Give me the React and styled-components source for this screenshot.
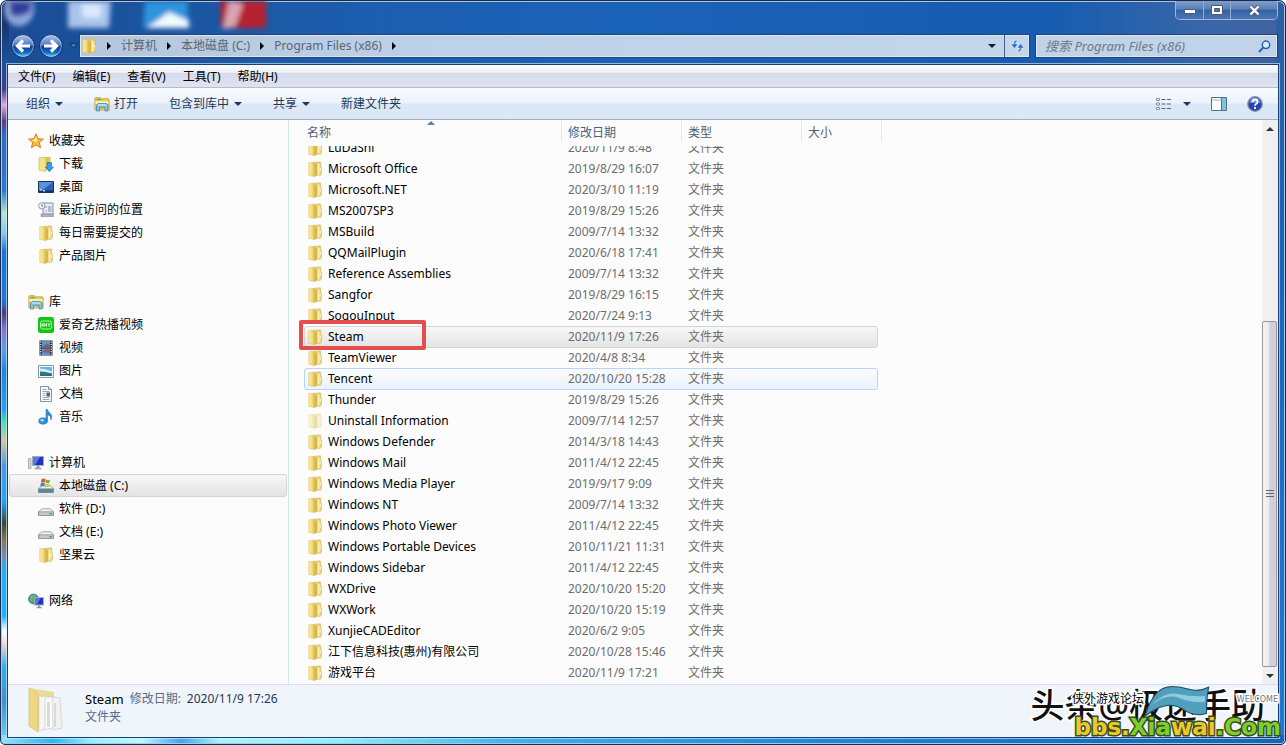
import { useId } from "react";
import styled, { createGlobalStyle } from "styled-components";

const GlobalStyle = createGlobalStyle`
  * {
    box-sizing: border-box;
  }

  body {
    margin: 0;
    font-family: "Noto Sans", "Noto Sans CJK SC", sans-serif;
    font-size: 12px;
    line-height: 20px;
    color: #000;
  }

  button,
  input {
    font: inherit;
    color: inherit;
    border: 0;
    padding: 0;
    background: none;
  }

  svg {
    display: block;
    flex-shrink: 0;
  }
`;

const Window = styled.div`
  position: relative;
  display: flex;
  flex-direction: column;
  height: 100vh;
  min-height: 480px;
  padding: 0 7px 7px;
  overflow: hidden;
  border: 1px solid #1b2c4a;
  border-radius: 7px 7px 5px 5px;
  box-shadow: inset 0 0 0 1px #a9c6e6;
  background:
    linear-gradient(
        90deg,
        #8fe6fb 0%,
        #26b6f0 4%,
        #8ff3ff 7%,
        #b6fbff 11%,
        #3fa4f0 14%,
        #a5f5fb 17%,
        #8df1f8 26%,
        #35b5ee 40%,
        #1b8ae0 62%,
        #1272c8 84%,
        #1566b4 100%
      )
      bottom / 100% 9px no-repeat,
    linear-gradient(
        180deg,
        #12295c 0,
        #1c4f9a 60px,
        #3b3f8f 88px,
        #e6a6e6 104px,
        #5f3f86 120px,
        #2a6cc0 135px,
        #2b7ad0 190px,
        #b4ecc8 212px,
        #86cbe8 232px,
        #1d74d0 250px,
        #1d78d4 300px,
        #4a3c7c 312px,
        #8a72d8 328px,
        #5aa0e6 350px,
        #1d86de 370px,
        #25a0ee 408px,
        #3fe0b0 420px,
        #d6c8a0 440px,
        #4a9be0 465px,
        #1fa6f4 500px,
        #3a4a3a 522px,
        #8a7a50 540px,
        #6f8fb0 556px,
        #24aef6 570px,
        #1fb2fa 615px,
        #ffffff 630px,
        #f0d0d0 645px,
        #38aef0 665px,
        #3f8fd0 700px,
        #6fd8f8 100%
      )
      left / 8px 100% no-repeat,
    linear-gradient(180deg, #2f5f9f, #1a63b8 30%, #1c7ad8) right / 9px 100% no-repeat,
    linear-gradient(90deg, #1a4c95 0, #1d5cab 24%, #1a62b8 48%, #175cb0 82%, #3a66a8 94%, #41639f 100%);
`;

const DesktopGlow = styled.svg`
  position: absolute;
  top: 0;
  left: 0;
`;

const Caption = styled.div`
  display: flex;
  justify-content: flex-end;
  height: 33px;
  flex-shrink: 0;
`;

const CaptionButtons = styled.div`
  position: relative;
  display: flex;
  height: 19px;
  border: 1px solid #9fb6d8;
  border-top: 0;
  border-radius: 0 0 5px 5px;
  overflow: hidden;
`;

const CaptionButton = styled.button`
  display: flex;
  align-items: center;
  justify-content: center;
  width: ${(props) => (props.$wide ? 47 : 27)}px;
  background: linear-gradient(180deg, #7f9cc9 0, #5a80b8 45%, #3561a3 50%, #4a76b4 100%);
  border-left: ${(props) => (props.$first ? 0 : 1)}px solid #93acd2;
`;

const NavigationRow = styled.div`
  position: relative;
  display: flex;
  align-items: center;
  height: 24px;
  margin-bottom: 7px;
  padding-left: 3px;
  flex-shrink: 0;
`;

const RoundButton = styled.button`
  width: 24px;
  height: 24px;
  margin-right: 4px;
`;

const HistoryButton = styled.button`
  width: 12px;
  display: flex;
  justify-content: center;
`;

const AddressBar = styled.div`
  display: flex;
  align-items: stretch;
  flex: 1;
  min-width: 0;
  height: 24px;
  border: 1px solid #25436f;
  box-shadow: inset 0 0 0 1px #dce8f5;
  background: linear-gradient(90deg, #b3c6dd, #bdd2ea 40%, #c3d6ea);
`;

const AddressIcon = styled.span`
  display: flex;
  align-items: center;
  padding-left: 1px;
`;

const Crumb = styled.button`
  display: flex;
  align-items: center;
  color: #5c6570;
  white-space: nowrap;
`;

const CrumbArrow = styled.span`
  display: flex;
  align-items: center;
  justify-content: center;
  width: 24px;
`;

const AddressEnd = styled.div`
  display: flex;
  margin-left: auto;
`;

const AddressButton = styled.button`
  display: flex;
  align-items: center;
  justify-content: center;
  width: 25px;
  border-left: ${(props) => (props.$divided ? 1 : 0)}px solid #3d5c88;
`;

const SearchBox = styled.label`
  display: flex;
  align-items: center;
  flex: 0 0 243px;
  height: 24px;
  margin-left: 5px;
  padding: 0 6px 0 9px;
  border: 1px solid #25436f;
  box-shadow: inset 0 0 0 1px #dce8f5;
  background: #c0d3e8;
`;

const SearchInput = styled.input`
  flex: 1;
  min-width: 0;
  font-size: 13px;
  font-style: italic;
  outline: 0;

  &::placeholder {
    color: #6d7883;
    opacity: 1;
  }
`;

const Client = styled.div`
  position: relative;
  display: flex;
  flex-direction: column;
  flex: 1;
  min-height: 0;
  background: #fcfcfc;
  outline: 1px solid #1d3d6c;
  box-shadow: 0 0 0 2px rgba(225, 240, 255, 0.6);
`;

const MenuBar = styled.nav`
  display: flex;
  align-items: center;
  gap: 17px;
  height: 23px;
  padding: 1px 0 0 10px;
  flex-shrink: 0;
  background: linear-gradient(180deg, #fdfdfe 0, #eceff8 34%, #d5daea 36%, #dfe4f1 100%);
  border-bottom: 1px solid #b5bccc;
`;

const CommandBar = styled.div`
  display: flex;
  align-items: center;
  gap: 31px;
  height: 32px;
  padding: 0 15px 0 18px;
  flex-shrink: 0;
  color: #1e395b;
  background: linear-gradient(180deg, #fafcff 0, #eaf2fb 48%, #dce7f5 52%, #dde8f6 100%);
  border-bottom: 1px solid #a0afc3;
`;

const CommandButton = styled.button`
  display: flex;
  align-items: center;
  gap: ${(props) => props.$gap || 5}px;
`;

const CommandEnd = styled.div`
  display: flex;
  align-items: center;
  gap: 20px;
  margin-left: auto;
`;

const Body = styled.div`
  display: flex;
  flex: 1;
  min-height: 0;
`;

const Sidebar = styled.nav`
  display: flex;
  flex-direction: column;
  gap: 23px;
  flex: 0 0 281px;
  padding: 9px 1px 0;
  overflow: hidden;
  border-right: 1px solid #d6e5f5;
`;

const SidebarRow = styled.a`
  display: flex;
  align-items: center;
  gap: 5px;
  height: 23px;
  padding-left: ${(props) => (props.$nested ? 28 : 18)}px;
  color: #000;
  text-decoration: none;
  border: 1px solid ${(props) => (props.$active ? "#d4d4d4" : "transparent")};
  border-radius: 3px;
  background: ${(props) => (props.$active ? "linear-gradient(180deg, #f8f8f8, #e4e4e4)" : "none")};
`;

const FileTable = styled.table`
  display: flex;
  flex-direction: column;
  flex: 1;
  min-width: 0;
  padding-left: 4px;
  text-align: left;
`;

const FileHead = styled.thead`
  display: block;
  flex-shrink: 0;
  padding-left: 8px;
`;

const HeadRow = styled.tr`
  display: grid;
  grid-template-columns: 261px 120px 120px 80px;
  height: 26px;
`;

const HeadCell = styled.th`
  position: relative;
  height: 22px;
  padding: 4px 6px 0;
  line-height: 18px;
  font-weight: 400;
  color: #4c607a;
  border-right: 1px solid #e0e8f0;
`;

const SortMark = styled.svg`
  position: absolute;
  top: 1px;
  left: 50%;
  transform: translateX(-50%);
`;

const FileBody = styled.tbody`
  display: flex;
  flex-direction: column;
  justify-content: flex-end;
  flex: 1;
  min-height: 0;
  padding: 0 0 1px 11px;
  overflow: hidden;
`;

const rowStates = {
  selected: { border: "#d4d4d4", fill: "linear-gradient(180deg, #f8f8f8, #e4e4e4)" },
  hover: { border: "#b8d6fb", fill: "linear-gradient(180deg, #fafbfd, #ebf3fd)" },
  none: { border: "transparent", fill: "none" },
};

const FileRow = styled.tr`
  display: grid;
  grid-template-columns: 257px 120px 1fr;
  flex-shrink: 0;
  width: 574px;
  height: ${(props) => (props.$state === "none" ? 21 : 22)}px;
  margin-bottom: ${(props) => (props.$state === "none" ? 0 : -1)}px;
  border: 1px solid ${(props) => rowStates[props.$state].border};
  border-radius: 3px;
  background: ${(props) => rowStates[props.$state].fill};
`;

const FileName = styled.td`
  position: relative;
  display: flex;
  align-items: center;
  gap: 5px;
  height: 20px;
  padding: 0 0 0 2px;
  white-space: nowrap;
`;

const FileCell = styled.td`
  padding: 0 6px;
  color: #6d6d6d;
  white-space: nowrap;
`;

const RedFrame = styled.span`
  position: absolute;
  top: -7px;
  left: -6px;
  width: 127px;
  height: 30px;
  border: 4px solid #e34f4f;
  border-radius: 2px;
`;

const ScrollBar = styled.div`
  display: flex;
  flex-direction: column;
  flex: 0 0 16px;
  background: #f0f0f0;
`;

const ScrollButton = styled.button`
  display: flex;
  align-items: center;
  justify-content: center;
  height: 17px;
`;

const ScrollTrack = styled.div`
  display: flex;
  flex-direction: column;
  flex: 1;
`;

const ScrollSpace = styled.div`
  flex: 184;
`;

const ScrollThumb = styled.div`
  display: flex;
  align-items: center;
  justify-content: center;
  flex: 345;
  margin-right: 1px;
  border: 1px solid #989898;
  border-radius: 2px;
  background: linear-gradient(90deg, #f6f6f6, #e9e9eb 45%, #cfd0d6 55%, #d2cfdc);
`;

const DetailsPane = styled.footer`
  display: flex;
  gap: 20px;
  height: 53px;
  padding: 2px 0 0 19px;
  flex-shrink: 0;
  background: #f0f4fb;
  border-top: 1px solid #d5dfec;
`;

const DetailsText = styled.div`
  padding-top: 3px;
  line-height: 18px;
`;

const DetailsLine = styled.div`
  display: flex;
  gap: 6px;
  color: #5a6b85;
`;

const DetailsName = styled.span`
  font-size: 13px;
  color: #000;
`;

const DetailsDate = styled.span`
  color: #1e395b;
`;

const Stamp = styled.div`
  position: absolute;
  right: 4px;
  bottom: 3px;
  width: 252px;
  height: 56px;
  white-space: nowrap;
  -webkit-text-stroke: 3px #fff;
  paint-order: stroke fill;
`;

const StampAuthor = styled.span`
  position: absolute;
  top: 0;
  right: 16px;
  font-size: 34px;
  font-weight: 500;
  line-height: 40px;
  color: #111;
`;

const StampForum = styled.span`
  position: absolute;
  top: 5px;
  left: 43px;
  line-height: 18px;
`;

const StampWelcome = styled.span`
  position: absolute;
  top: 9px;
  right: 3px;
  font-family: "DejaVu Sans", sans-serif;
  font-size: 8px;
  line-height: 12px;
  color: #777;
`;

const StampSwoosh = styled.svg`
  position: absolute;
  top: 0;
  left: 115px;
`;

const StampSite = styled.span`
  position: absolute;
  right: 0;
  bottom: 0;
  font-family: "DejaVu Sans", sans-serif;
  font-size: 23px;
  font-weight: 700;
  line-height: 28px;
  -webkit-text-stroke: 3px #34501a;
`;

const StampPart = styled.span`
  color: ${(props) => (props.$gold ? "#f0c62c" : "#7fce2c")};
`;

function FolderIcon({ faded }) {
  const id = useId();
  return (
    <svg width="16" height="16" viewBox="0 0 16 16" opacity={faded ? 0.45 : 1}>
      <defs>
        <linearGradient id={id} x1="0" x2="1">
          <stop offset="0" stopColor="#fbf0a8" />
          <stop offset="0.5" stopColor="#f1dc78" />
          <stop offset="1" stopColor="#d3ad3a" />
        </linearGradient>
      </defs>
      <path d="M6 1.5 13 .8q.8 0 .8.8v4l.7.5v6.500l-1 1.700H6z" fill="#ead27a" stroke="#cdb058" strokeWidth=".5" />
      <path d="M10 3.200 12.600 3v10.400H10z" fill="#f9eeb0" />
      <path d="M1.800 1.800 7 1.400l1.600 1.200v12.600l-1.200.3-5.600-1.200z" fill={`url(#${id})`} stroke="#d9c068" strokeWidth=".6" />
      <path d="M8.600 3.500 10.300 3v11l-1.700 1z" fill="#d6b24a" />
      <path d="M12.700 6.800h1.100v2.700h-1.100z" fill="#fffbe0" />
    </svg>
  );
}

function DownloadsIcon() {
  return (
    <svg width="16" height="16" viewBox="0 0 16 16">
      <path d="M5 1h7.5v12.5H5z" fill="#dfc45c" />
      <path d="M1 1.8 6 1l2 1.4V15l-1 .3-6-1.1z" fill="#f5e287" stroke="#ccae4a" strokeWidth=".6" />
      <path d="M9.2 6.5h4.2v4.7h2l-4 4.5-4-4.5h1.8z" fill="#35a0e8" stroke="#126bb0" strokeWidth=".7" />
    </svg>
  );
}

function DesktopIcon() {
  return (
    <svg width="16" height="16" viewBox="0 0 16 16">
      <path d="M.5 2.5h15v11H.5z" fill="#2a5fc0" stroke="#22344d" />
      <path d="M1 3h14L3 12H1z" fill="#5a90e2" />
      <path d="M1 11.5h14V13H1z" fill="#1b2f58" />
      <path d="M2 10h2v1.6H2zm3 1h2v1.4H5z" fill="#a9e4f5" />
    </svg>
  );
}

function RecentIcon() {
  return (
    <svg width="16" height="16" viewBox="0 0 16 16">
      <path d="M5 1h10v11H5z" fill="#e7edf3" stroke="#8392a1" />
      <path d="M7 4h2v2H7zm0 4h2v2H7z" fill="#b4c6da" />
      <path d="M10 5h3.5M10 7h3.5M10 9h3.5" stroke="#7290b4" />
      <path d="M3 12h12.5v2.5H3z" fill="#abb3bb" stroke="#838d96" strokeWidth=".6" />
      <circle cx="3.8" cy="3.8" r="3.2" fill="#f5f7f9" stroke="#8f9aa5" />
      <path d="M3.8 2v2h1.6" fill="none" stroke="#5a6670" strokeWidth=".8" />
    </svg>
  );
}

function StarIcon() {
  return (
    <svg width="16" height="16" viewBox="0 0 16 16">
      <path d="m8 .8 2 5 5.4.3-4.2 3.4 1.5 5.3L8 11.8l-4.700 3 1.500-5.300L.6 6.100 6 5.800z" fill="#fdbb3c" stroke="#d87c1a" strokeLinejoin="round" />
      <path d="m8 3 1.200 3.700L8 9 3.300 7 6.700 6.700z" fill="#fff0a2" />
    </svg>
  );
}

function LibraryIcon() {
  return (
    <svg width="16" height="16" viewBox="0 0 16 16">
      <path d="M.8 2.500 1.500 1.500h5l1 1.200h7l.7 1V14H.8z" fill="#e9c659" stroke="#c59e36" strokeWidth=".7" />
      <path d="M1.500 5h12.800v3H1.500z" fill="#fbefae" />
      <path d="m2.400 3.500 4.700.2" stroke="#58ad5f" strokeWidth="1.200" />
      <path d="M2.500 15V9.200l1.500-1.700h8.500l1.500 1.700V15h-3v-3.700H5.500V15z" fill="#81c4e8" stroke="#3681b1" strokeWidth=".7" />
      <path d="M4 9h8.200" stroke="#dcf5ff" />
    </svg>
  );
}

function IqiyiIcon() {
  return (
    <svg width="16" height="16" viewBox="0 0 16 16">
      <rect width="16" height="16" rx="2.5" fill="#0fc70f" />
      <rect x="2.5" y="4" width="11" height="8" rx="2" fill="none" stroke="#d9ffd9" strokeWidth=".8" />
      <circle cx="6" cy="8" r="1.3" fill="none" stroke="#fff" strokeWidth=".9" />
      <path d="M4 6.3v3.4M8.5 6.3v3.4M10 6.3l1 1.5 1-1.5M11 7.8v1.9" fill="none" stroke="#fff" strokeWidth=".9" />
    </svg>
  );
}

function VideoIcon() {
  return (
    <svg width="16" height="16" viewBox="0 0 16 16">
      <path d="M1.5.5h13v15h-13z" fill="#25303c" />
      <path d="M4 1h8v6.5H4zM4 8.5h8V15H4z" fill="#5297cf" />
      <path d="M4 6.5c2 0 3-2 5-3l3 2v2H4zM4 12l4-3 4 1v3z" fill="#8d5b6d" />
      <path d="M2.8 1.5v13M13.2 1.5v13" stroke="#fff" strokeWidth="1.2" strokeDasharray="1.2 1.2" />
    </svg>
  );
}

function PictureIcon() {
  return (
    <svg width="16" height="16" viewBox="0 0 16 16">
      <path d="M.5 2.5h15v12H.5z" fill="#fff" stroke="#8796a6" />
      <path d="M2 4h12v9H2z" fill="#67b3ea" />
      <path d="M2 5.5q5 0 12 3V10H2z" fill="#d0effa" />
      <path d="M2 8.5q5 0 12 2V13H2z" fill="#2c8060" />
      <path d="M2 11.5h12V13H2z" fill="#2466a8" />
    </svg>
  );
}

function DocumentIcon() {
  return (
    <svg width="16" height="16" viewBox="0 0 16 16">
      <path d="M2.5.5h8l3 3v12h-11z" fill="#fdfeff" stroke="#8494a5" />
      <path d="M10.5.5v3h3" fill="#dce6ef" stroke="#8494a5" />
      <path d="M4.5 3.5h4M4.5 5.5h7M4.5 7.5h3M4.5 9.5h3M4.5 11.5h7M4.5 13.5h7" stroke="#9ba8b7" />
      <path d="M8.5 6.5H12v4H8.5z" fill="#3f648f" />
    </svg>
  );
}

function MusicIcon() {
  return (
    <svg width="16" height="16" viewBox="0 0 16 16">
      <ellipse cx="5" cy="12" rx="4.300" ry="3.200" fill="#2d91d4" stroke="#1c70ad" strokeWidth=".5" />
      <path d="M8 .5h1.500c.5 3 5 4 4.200 8.500-.3 1-.8 1.700-1.200 2 .7-3-.5-4.500-3-5v6.500H8z" fill="#2d91d4" stroke="#1c70ad" strokeWidth=".5" />
      <ellipse cx="4.200" cy="11.300" rx="1.800" ry="1.200" fill="#9dddf7" />
    </svg>
  );
}

function ComputerIcon() {
  return (
    <svg width="16" height="16" viewBox="0 0 16 16">
      <path d="M.5 3.500h2.500v10H.5z" fill="#d6dbe0" stroke="#8c959f" strokeWidth=".7" />
      <path d="M4.500 1.500h11v9h-11z" fill="#1f35c0" stroke="#a4abb4" />
      <path d="M5 2h7L7 10H5z" fill="#5878e6" />
      <path d="M8.500 11h3v1.800h2v1.400h-7v-1.400h2z" fill="#98a1ab" />
    </svg>
  );
}

function DriveIcon({ system }) {
  return (
    <svg width="16" height="16" viewBox="0 0 16 16">
      <path d="m3 8.500 1.500-.8h7.500l1.500.8 2 2.200v3.600H.5v-3.600z" fill="#eceeef" stroke="#84898e" strokeWidth=".7" />
      <path d="M.7 10.800h14.600v3.700H.7z" fill={system ? "#5488a6" : "#c5c9cc"} stroke="#777d82" strokeWidth=".6" />
      <path d="M11.500 12h2.300v1.400h-2.300z" fill="#4aa04a" />
      {system && (
        <g>
          <path d="M3.500 1.200q2-1.200 4 0L7 4.600q-2-1-4 0z" fill="#e4562a" />
          <path d="M8 1.500q2 1 4 0l-.5 3.300q-2 1-4 0z" fill="#76b83a" />
          <path d="M2.800 5.200q2-1.200 4 0l-.5 3.400q-2-1-4 0z" fill="#3c84d8" />
          <path d="M7.300 5.500q2 1 4 0l-.5 3.300q-2 1-4 0z" fill="#f5c22e" />
        </g>
      )}
    </svg>
  );
}

function NetworkIcon() {
  return (
    <svg width="16" height="16" viewBox="0 0 16 16">
      <circle cx="5.500" cy="6" r="5" fill="#2e93c4" stroke="#25708c" strokeWidth=".6" />
      <path d="M2 3q4-2 6 0L5 5.500 6 8 3.500 9.500Q1 7 2 3" fill="#65bb66" />
      <path d="M6.500 4.500h9v7.500h-9z" fill="#1e36c4" stroke="#a5acb5" />
      <path d="M7 5h5.500L9 11.500H7z" fill="#5577e5" />
      <path d="M10 12.500h2.200v1.500h1.500v1.300h-5V14H10z" fill="#8c959e" />
    </svg>
  );
}

function OpenFolderIcon() {
  return (
    <svg width="38" height="48" viewBox="0 0 38 48">
      <path d="m2 1 25 4v33l-15 6z" fill="#eadb9a" />
      <path d="m12 9 10 1v31l-10 3z" fill="#f5f5f5" stroke="#d0d0d0" strokeWidth=".7" />
      <path d="M18 12q6-4 10-1v29l-10 3z" fill="#fff" stroke="#c5c5c5" strokeWidth=".7" />
      <path d="m25 10 8 1 2 30-9 2z" fill="#f2f2f3" stroke="#ccc" strokeWidth=".7" />
      <path d="M20 15h3v25h-3zM27 16h2v24h-2z" fill="#d9dadc" />
      <path d="m2 1 9 6v38L2 39z" fill="#f0d783" stroke="#d7bd68" strokeWidth=".7" />
    </svg>
  );
}

function Triangle({ color = "#1e395b", direction = "down" }) {
  const paths = {
    down: "M0 2h8L4 6z",
    up: "M0 6h8L4 2z",
    right: "M2 0v8l4-4z",
  };
  return (
    <svg width="8" height="8" viewBox="0 0 8 8">
      <path d={paths[direction]} fill={color} />
    </svg>
  );
}

function ArrowOrb({ forward }) {
  const id = useId();
  return (
    <svg width="24" height="24" viewBox="0 0 24 24">
      <defs>
        <linearGradient id={id} x2="0" y2="1">
          <stop offset="0" stopColor="#b7c9e8" />
          <stop offset=".47" stopColor="#4a78c4" />
          <stop offset=".52" stopColor="#0c3c91" />
          <stop offset=".78" stopColor="#1468c4" />
          <stop offset="1" stopColor="#57d8fb" />
        </linearGradient>
      </defs>
      <circle cx="12" cy="12" r="11.400" fill={`url(#${id})`} stroke="#142f66" />
      <circle cx="12" cy="12" r="10.400" fill="none" stroke="#c7dcf4" strokeOpacity=".6" />
      <path
        d={forward ? "M5 12h12M12 6.500l5.500 5.500-5.500 5.500" : "M19 12H7M12 6.500 6.500 12l5.500 5.500"}
        fill="none"
        stroke="#fff"
        strokeWidth="3.200"
      />
    </svg>
  );
}

const sidebarGroups = [
  {
    label: "收藏夹",
    icon: <StarIcon />,
    items: [
      { label: "下载", icon: <DownloadsIcon /> },
      { label: "桌面", icon: <DesktopIcon /> },
      { label: "最近访问的位置", icon: <RecentIcon /> },
      { label: "每日需要提交的", icon: <FolderIcon /> },
      { label: "产品图片", icon: <FolderIcon /> },
    ],
  },
  {
    label: "库",
    icon: <LibraryIcon />,
    items: [
      { label: "爱奇艺热播视频", icon: <IqiyiIcon /> },
      { label: "视频", icon: <VideoIcon /> },
      { label: "图片", icon: <PictureIcon /> },
      { label: "文档", icon: <DocumentIcon /> },
      { label: "音乐", icon: <MusicIcon /> },
    ],
  },
  {
    label: "计算机",
    icon: <ComputerIcon />,
    items: [
      { label: "本地磁盘 (C:)", icon: <DriveIcon system />, active: true },
      { label: "软件 (D:)", icon: <DriveIcon /> },
      { label: "文档 (E:)", icon: <DriveIcon /> },
      { label: "坚果云", icon: <FolderIcon /> },
    ],
  },
  { label: "网络", icon: <NetworkIcon />, items: [] },
];

const files = [
  { name: "LuDaShi", date: "2020/11/9 8:48" },
  { name: "Microsoft Office", date: "2019/8/29 16:07" },
  { name: "Microsoft.NET", date: "2020/3/10 11:19" },
  { name: "MS2007SP3", date: "2019/8/29 15:26" },
  { name: "MSBuild", date: "2009/7/14 13:32" },
  { name: "QQMailPlugin", date: "2020/6/18 17:41" },
  { name: "Reference Assemblies", date: "2009/7/14 13:32" },
  { name: "Sangfor", date: "2019/8/29 16:15" },
  { name: "SogouInput", date: "2020/7/24 9:13" },
  { name: "Steam", date: "2020/11/9 17:26", state: "selected" },
  { name: "TeamViewer", date: "2020/4/8 8:34" },
  { name: "Tencent", date: "2020/10/20 15:28", state: "hover" },
  { name: "Thunder", date: "2019/8/29 15:26" },
  { name: "Uninstall Information", date: "2009/7/14 12:57", faded: true },
  { name: "Windows Defender", date: "2014/3/18 14:43" },
  { name: "Windows Mail", date: "2011/4/12 22:45" },
  { name: "Windows Media Player", date: "2019/9/17 9:09" },
  { name: "Windows NT", date: "2009/7/14 13:32" },
  { name: "Windows Photo Viewer", date: "2011/4/12 22:45" },
  { name: "Windows Portable Devices", date: "2010/11/21 11:31" },
  { name: "Windows Sidebar", date: "2011/4/12 22:45" },
  { name: "WXDrive", date: "2020/10/20 15:20" },
  { name: "WXWork", date: "2020/10/20 15:19" },
  { name: "XunjieCADEditor", date: "2020/6/2 9:05" },
  { name: "江下信息科技(惠州)有限公司", date: "2020/10/28 15:46" },
  { name: "游戏平台", date: "2020/11/9 17:21" },
];

const menus = ["文件(F)", "编辑(E)", "查看(V)", "工具(T)", "帮助(H)"];

const crumbs = ["计算机", "本地磁盘 (C:)", "Program Files (x86)"];

function TitleArea() {
  return (
    <>
      <DesktopGlow width="300" height="64" viewBox="0 0 300 64">
        <defs>
          <filter id="soft">
            <feGaussianBlur stdDeviation="2.500" />
          </filter>
        </defs>
        <g filter="url(#soft)">
          <ellipse cx="18" cy="8" rx="15" ry="17" fill="#8ea7dc" />
          <path d="M8 0h22v10q-12 8-20 4z" fill="#343e9c" />
          <path d="M67 0h43l-2 27H67z" fill="#a9c4ec" />
          <path d="M80 3h20v14H82z" fill="#dbe7fb" />
          <path d="M144 0h42l2 27h-46z" fill="#2e93dd" />
          <path d="m146 27 22-16 20 9v7z" fill="#f2faff" />
          <path d="M219 0h46v27h-45z" fill="#b52330" />
          <path d="m228 0 14 3-8 23-12 2z" fill="#d9a5b4" />
        </g>
      </DesktopGlow>
      <Caption>
        <CaptionButtons>
          <CaptionButton $first aria-label="最小化">
            <svg width="12" height="10" viewBox="0 0 12 10">
              <path d="M.5 4.500h11v4H.5z" fill="#fff" stroke="#4b5b7a" />
            </svg>
          </CaptionButton>
          <CaptionButton aria-label="最大化">
            <svg width="12" height="10" viewBox="0 0 12 10">
              <path d="M.5.5h11v9H.5z" fill="#fff" stroke="#4b5b7a" />
              <path d="M3.500 3.500h5v3h-5z" fill="#55749f" stroke="#4b5b7a" />
            </svg>
          </CaptionButton>
          <CaptionButton $wide aria-label="关闭">
            <svg width="13" height="11" viewBox="0 0 13 11">
              <path d="m2.500 1.500 8 8m0-8-8 8" stroke="#4b5b7a" strokeWidth="4" />
              <path d="m2.500 1.500 8 8m0-8-8 8" stroke="#fff" strokeWidth="2.400" />
            </svg>
          </CaptionButton>
        </CaptionButtons>
      </Caption>
      <NavigationRow>
        <RoundButton aria-label="后退">
          <ArrowOrb />
        </RoundButton>
        <RoundButton aria-label="前进">
          <ArrowOrb forward />
        </RoundButton>
        <HistoryButton aria-label="历史记录">
          <svg width="9" height="6" viewBox="0 0 9 6">
            <path d="M.8.800h7.400L4.500 4.800z" fill="#3a92d4" stroke="#0c2c5c" />
          </svg>
        </HistoryButton>
        <AddressBar>
          <AddressIcon>
            <FolderIcon />
          </AddressIcon>
          {crumbs.map((crumb) => (
            <Crumb key={crumb}>
              <CrumbArrow>
                <Triangle color="#000" direction="right" />
              </CrumbArrow>
              {crumb}
            </Crumb>
          ))}
          <CrumbArrow>
            <Triangle color="#000" direction="right" />
          </CrumbArrow>
          <AddressEnd>
            <AddressButton aria-label="以前的位置">
              <Triangle color="#0a1c3c" />
            </AddressButton>
            <AddressButton $divided aria-label="刷新">
              <svg width="15" height="14" viewBox="0 0 15 14">
                <path
                  d="M7 1Q3.500 1 3.500 5H.8L4.500 9.500 8 5H5.500q0-2 1.500-2zM8 13q3.500 0 3.500-4h2.700L10.500 4.500 7 9h2.500q0 2-1.500 2z"
                  fill="#2f6fcb"
                  stroke="#fff"
                  strokeWidth=".5"
                />
              </svg>
            </AddressButton>
          </AddressEnd>
        </AddressBar>
        <SearchBox>
          <SearchInput type="text" aria-label="搜索" placeholder="搜索 Program Files (x86)" />
          <svg width="13" height="13" viewBox="0 0 13 13">
            <circle cx="8" cy="4.800" r="3.700" fill="#d9ebfa" stroke="#2b66ac" strokeWidth="1.500" />
            <path d="M5.200 7.500 1 12" stroke="#2b66ac" strokeWidth="2" />
          </svg>
        </SearchBox>
      </NavigationRow>
    </>
  );
}

function Commands() {
  return (
    <CommandBar>
      <CommandButton>
        组织
        <Triangle />
      </CommandButton>
      <CommandButton $gap={4}>
        <LibraryIcon />
        打开
      </CommandButton>
      <CommandButton>
        包含到库中
        <Triangle />
      </CommandButton>
      <CommandButton>
        共享
        <Triangle />
      </CommandButton>
      <CommandButton>新建文件夹</CommandButton>
      <CommandEnd>
        <CommandButton $gap={11} aria-label="更改视图">
          <svg width="16" height="14" viewBox="0 0 16 14">
            <path d="M.5 1.500h3v2h-3zM.5 6h3v2h-3zM.5 10.500h3v2h-3z" fill="#fff" stroke="#7890aa" />
            <path d="M5.500 2.500h4M11 2.500h4M5.500 7h4M11 7h4M5.500 11.500h4M11 11.500h4" stroke="#4f6480" />
          </svg>
          <Triangle />
        </CommandButton>
        <CommandButton aria-label="显示预览窗格">
          <svg width="16" height="14" viewBox="0 0 16 14">
            <path d="M.5.5h15v13H.5z" fill="#fff" stroke="#4f708f" />
            <path d="M10.500 1v12.500" stroke="#4f708f" />
            <path d="M11 1h4v12h-4z" fill="#7cc3df" />
            <path d="M1 3h9.500" stroke="#9bb5cb" />
          </svg>
        </CommandButton>
        <CommandButton aria-label="获取帮助">
          <svg width="16" height="16" viewBox="0 0 16 16">
            <circle cx="8" cy="8" r="7.300" fill="#2444b0" stroke="#8c97ac" strokeWidth="1.300" />
            <path d="M2.500 7a5.500 5.500 0 0 1 11 0z" fill="#6f8bdc" />
            <path
              d="M5.500 6q0-2.500 2.500-2.500T10.500 6q0 1-1.200 1.800Q8 8.600 8 9.800M8 11v2"
              fill="none"
              stroke="#fff"
              strokeWidth="1.800"
            />
          </svg>
        </CommandButton>
      </CommandEnd>
    </CommandBar>
  );
}

function SidebarTree() {
  return (
    <Sidebar>
      {sidebarGroups.map((group) => (
        <div key={group.label}>
          <SidebarRow href="#">
            {group.icon}
            {group.label}
          </SidebarRow>
          {group.items.map((item) => (
            <SidebarRow key={item.label} href="#" $nested $active={item.active}>
              {item.icon}
              {item.label}
            </SidebarRow>
          ))}
        </div>
      ))}
    </Sidebar>
  );
}

function FileList() {
  return (
    <FileTable>
      <FileHead>
        <HeadRow>
          <HeadCell>
            名称
            <SortMark width="8" height="4" viewBox="0 0 8 4">
              <path d="M0 4h8L4 0z" fill="#5b7ea5" />
            </SortMark>
          </HeadCell>
          <HeadCell>修改日期</HeadCell>
          <HeadCell>类型</HeadCell>
          <HeadCell>大小</HeadCell>
        </HeadRow>
      </FileHead>
      <FileBody>
        {files.map((file) => (
          <FileRow key={file.name} $state={file.state || "none"}>
            <FileName>
              <FolderIcon faded={file.faded} />
              {file.name}
              {file.state === "selected" && <RedFrame />}
            </FileName>
            <FileCell>{file.date}</FileCell>
            <FileCell>文件夹</FileCell>
          </FileRow>
        ))}
      </FileBody>
    </FileTable>
  );
}

function Scroller() {
  return (
    <ScrollBar>
      <ScrollButton aria-label="向上滚动">
        <Triangle color="#333" direction="up" />
      </ScrollButton>
      <ScrollTrack>
        <ScrollSpace />
        <ScrollThumb>
          <svg width="8" height="8" viewBox="0 0 8 8">
            <path d="M0 .5h8M0 3.500h8M0 6.500h8" stroke="#666" />
          </svg>
        </ScrollThumb>
      </ScrollTrack>
      <ScrollButton aria-label="向下滚动">
        <Triangle color="#333" />
      </ScrollButton>
    </ScrollBar>
  );
}

function ForumStamp() {
  return (
    <Stamp>
      <StampAuthor>头条@极速手助</StampAuthor>
      <StampSwoosh width="70" height="34" viewBox="0 0 70 34">
        <path
          d="M2 30Q10 2 28 2c16 0 22 8 36 1q-2 10-2 25-12 4-24-5Q22 14 2 30z"
          fill="#4f9fbd"
          stroke="#1c4a63"
          strokeWidth="2"
        />
        <path d="M8 20Q20 6 34 9t27 2v6q-14 1-26-4T8 20z" fill="#8fcbe0" />
      </StampSwoosh>
      <StampForum>侠外游戏论坛</StampForum>
      <StampWelcome>WELCOME</StampWelcome>
      <StampSite>
        <StampPart $gold>bbs.</StampPart>
        <StampPart>Xia</StampPart>
        <StampPart $gold>wai</StampPart>
        <StampPart>.Com</StampPart>
      </StampSite>
    </Stamp>
  );
}

export default function App() {
  return (
    <>
      <GlobalStyle />
      <Window>
        <TitleArea />
        <Client>
          <MenuBar>
            {menus.map((menu) => (
              <button key={menu}>{menu}</button>
            ))}
          </MenuBar>
          <Commands />
          <Body>
            <SidebarTree />
            <FileList />
            <Scroller />
          </Body>
          <DetailsPane>
            <OpenFolderIcon />
            <DetailsText>
              <DetailsLine>
                <DetailsName>Steam</DetailsName>
                <span>修改日期:</span>
                <DetailsDate>2020/11/9 17:26</DetailsDate>
              </DetailsLine>
              <DetailsLine>文件夹</DetailsLine>
            </DetailsText>
          </DetailsPane>
        </Client>
        <ForumStamp />
      </Window>
    </>
  );
}
